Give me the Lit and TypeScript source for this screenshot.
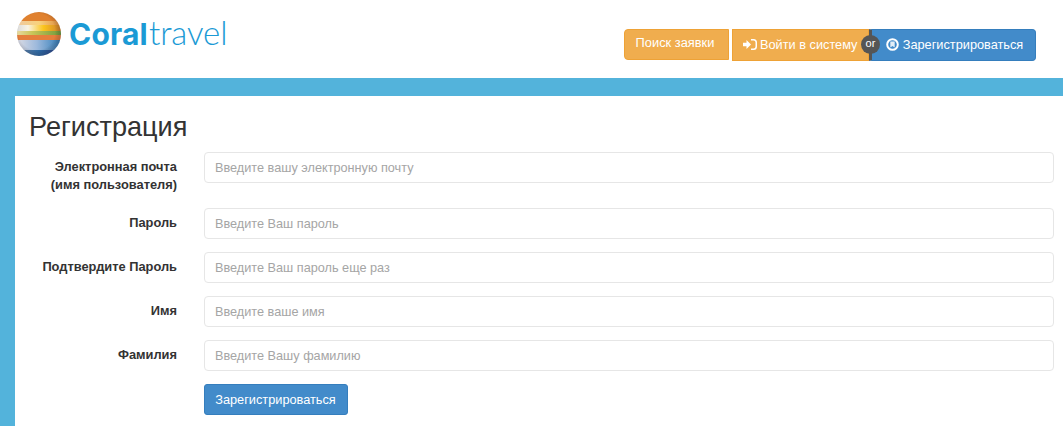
import { LitElement, html, css } from "lit";
import { customElement } from "lit/decorators.js";

const FIELDS = [
  { label: ["Электронная почта", "(имя пользователя)"], ph: "Введите вашу электронную почту" },
  { label: ["Пароль"], ph: "Введите Ваш пароль" },
  { label: ["Подтвердите Пароль"], ph: "Введите Ваш пароль еще раз" },
  { label: ["Имя"], ph: "Введите ваше имя" },
  { label: ["Фамилия"], ph: "Введите Вашу фамилию" },
];

@customElement("app-root")
export class AppRoot extends LitElement {
  static styles = css`
    :host { display: block; width: 1063px; height: 426px; overflow: hidden; background: #fff;
      font-family: "Liberation Sans", Arial, sans-serif; font-size: 12.75px; color: #333; }
    * { box-sizing: border-box; }
    .header { height: 78px; display: flex; justify-content: space-between; align-items: flex-start; padding: 0 27px 0 17px; }
    .logo { display: flex; align-items: center; gap: 8px; margin-top: 11px; }
    .logo svg { display: block; }
    .wordmark { display: flex; align-items: baseline; color: #1b9ad5; line-height: 44px; margin-top: -1px; }
    .wordmark b { font-family: Inter, sans-serif; font-weight: 700; font-size: 30px; letter-spacing: 0.2px; }
    .wordmark span { font-family: Lato, sans-serif; font-weight: 300; font-size: 33px; margin-left: 1px; letter-spacing: -0.1px; }
    .actions { position: relative; display: flex; align-items: flex-start; margin-top: 29px; }
    .btn { display: flex; align-items: center; justify-content: center; color: #fff; font-size: 12.75px; height: 32px; border: 1px solid; white-space: nowrap; }
    .search { width: 105px; height: 31px; margin-right: 3px; background: #f0ad4e; border-color: #eea236; border-radius: 4px 0 0 4px; padding: 0 3px 4px 0; font-size: 12.85px; }
    .login { width: 137px; background: #f0ad4e; border-color: #eea236; gap: 3px; justify-content: flex-start; padding-left: 10px; padding-bottom: 2px; }
    .register { width: 167px; background: #428bca; border-color: #357ebd; border-left: 3px solid #555; border-radius: 0 4px 4px 0; gap: 4px; padding-bottom: 2px; padding-left: 2px; }
    .or { position: absolute; left: 237px; top: 6px; width: 19px; height: 19px; border-radius: 50%; background: #555; color: #fff; font-size: 11px; display: flex; align-items: center; justify-content: center; padding-bottom: 3px; }
    .page { height: 348px; background: #53b3db; padding: 18px 0 0 15px; }
    .content { height: 100%; background: #fff; padding: 0 9px 0 14px; }
    h1 { margin: 0; font-weight: 400; font-size: 27.1px; line-height: 31px; height: 56px; padding-top: 15px; color: #333; }
    .row { display: grid; grid-template-columns: 148px 1fr; column-gap: 27px; margin-bottom: 13px; }
    .row.tall { margin-bottom: 0; min-height: 56px; }
    .row label { text-align: right; font-weight: 700; font-size: 12.85px; line-height: 18px; padding-top: 6px; color: #333; white-space: nowrap; }
    .input { height: 31px; border: 1px solid #e6e6e6; border-radius: 4px; padding: 0 10px; display: flex; align-items: center; color: #a5a5a5; font-size: 12.7px; background: #fff; }
    .submit { margin-left: 175px; width: 144px; height: 31px; background: #428bca; border-color: #357ebd; border-radius: 3px; padding-right: 1px; }
  `;

  render() {
    return html`
      <div class="header">
        <div class="logo">
          <svg width="44" height="44" viewBox="0 0 44 44">
            <defs>
              <clipPath id="globe"><circle cx="22" cy="22" r="22" /></clipPath>
              <linearGradient id="top" x1="0" x2="1" y1="0" y2="0">
                <stop offset="0" stop-color="#eec9a0" /><stop offset="0.5" stop-color="#f8d27c" /><stop offset="1" stop-color="#dd8a3a" />
              </linearGradient>
              <linearGradient id="mid" x1="0" x2="1" y1="0" y2="0">
                <stop offset="0" stop-color="#dcdcdc" /><stop offset="0.25" stop-color="#f8f3e4" /><stop offset="0.6" stop-color="#fbc51d" /><stop offset="1" stop-color="#cf7f2a" />
              </linearGradient>
              <linearGradient id="green" x1="0" x2="1" y1="0" y2="0">
                <stop offset="0" stop-color="#e8d9a0" /><stop offset="0.35" stop-color="#c9c558" /><stop offset="1" stop-color="#6f9a3c" />
              </linearGradient>
              <linearGradient id="low" x1="0" x2="1" y1="0" y2="0">
                <stop offset="0" stop-color="#dcdce4" /><stop offset="0.45" stop-color="#9db9dc" /><stop offset="1" stop-color="#2f7cb8" />
              </linearGradient>
              <linearGradient id="deep" x1="0" x2="1" y1="0" y2="0">
                <stop offset="0" stop-color="#6a86a8" /><stop offset="0.5" stop-color="#2e6aa6" /><stop offset="1" stop-color="#27408a" />
              </linearGradient>
              <radialGradient id="shade" cx="0.45" cy="0.45" r="0.55">
                <stop offset="0.75" stop-color="#000" stop-opacity="0" /><stop offset="1" stop-color="#2a2030" stop-opacity="0.22" />
              </radialGradient>
            </defs>
            <g clip-path="url(#globe)">
              <rect width="44" height="9" fill="#e0812f" />
              <rect y="9" width="44" height="4" fill="url(#top)" />
              <rect y="13" width="44" height="6" fill="url(#mid)" />
              <rect y="19" width="44" height="4" fill="url(#green)" />
              <rect y="23" width="44" height="5" fill="#e57e3c" />
              <rect y="28" width="44" height="10" fill="url(#low)" />
              <rect y="38" width="44" height="6" fill="url(#deep)" />
              <rect width="44" height="44" fill="url(#shade)" />
            </g>
          </svg>
          <div class="wordmark"><b>Coral</b><span>travel</span></div>
        </div>
        <div class="actions">
          <div class="btn search">Поиск заявки</div>
          <div class="btn login">
            <svg width="14" height="11" viewBox="0 0 14 11" fill="#fff">
              <path d="M0 3.800h3.500V1l4.500 4.500L3.500 10V7.200H0z" />
              <path d="M8 0h2.500A3.500 3.500 0 0 1 14 3.500v4a3.500 3.500 0 0 1-3.500 3.500H8V9.500h2.500a2 2 0 0 0 2-2v-4a2 2 0 0 0-2-2H8z" />
            </svg>
            <span>Войти в систему</span>
          </div>
          <div class="btn register">
            <svg width="13" height="13" viewBox="0 0 13 13">
              <circle cx="6.500" cy="6.500" r="5.300" fill="none" stroke="#fff" stroke-width="2" />
              <path d="M4.300 3.600h4.400v5.800l-2.200-1.500-2.200 1.500z" fill="#fff" opacity="0.85" />
            </svg>
            <span>Зарегистрироваться</span>
          </div>
          <div class="or">or</div>
        </div>
      </div>
      <div class="page">
        <div class="content">
          <h1>Регистрация</h1>
          ${FIELDS.map(
            (f) => html`
              <div class="row ${f.label.length > 1 ? "tall" : ""}">
                <label>${f.label.map((l) => html`<div>${l}</div>`)}</label>
                <div class="input">${f.ph}</div>
              </div>
            `
          )}
          <div class="btn submit">Зарегистрироваться</div>
        </div>
      </div>
    `;
  }
}
